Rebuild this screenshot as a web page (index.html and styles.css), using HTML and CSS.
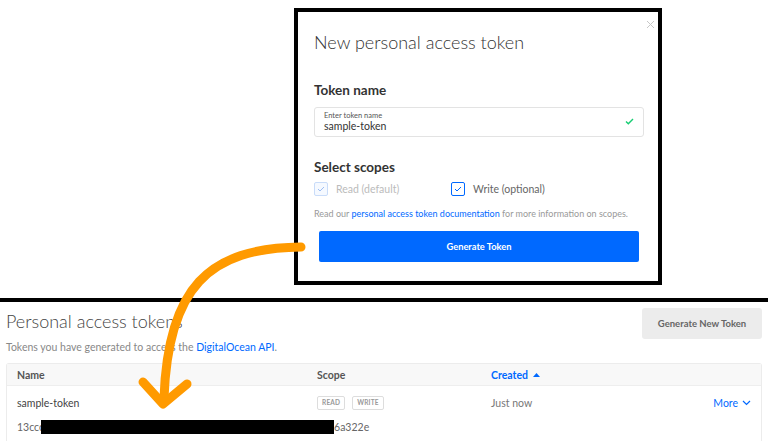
FILE: index.html
```html
<!DOCTYPE html>
<html lang="en">
<head>
  <meta charset="UTF-8" />
  <title>Personal access tokens</title>
  <link rel="stylesheet" href="styles.css">
</head>
<body>
  <div class="stage">
    <div class="modal">
      <span class="close">
        <svg width="9" height="9" viewBox="0 0 9 9"><path d="M1 1L8 8M8 1L1 8" stroke="#c8c8c8" stroke-width="1"/></svg>
      </span>
      <h2 class="modal-title">New personal access token</h2>

      <h3 class="section-title">Token name</h3>
      <div class="field">
        <div class="field-text">
          <span class="field-label">Enter token name</span>
          <span class="field-value">sample-token</span>
        </div>
        <svg class="field-check" width="9" height="7" viewBox="0 0 9 7"><path d="M1 3.6L3.3 5.8L8 1" fill="none" stroke="#15cd72" stroke-width="1.4"/></svg>
      </div>

      <h3 class="section-title scopes-title">Select scopes</h3>
      <div class="scopes">
        <label class="scope disabled">
          <span class="box"><svg width="8" height="6" viewBox="0 0 8 6"><path d="M1 3L3 5L7 1" fill="none" stroke="currentColor" stroke-width="1"/></svg></span>
          Read (default)
        </label>
        <label class="scope">
          <span class="box"><svg width="8" height="6" viewBox="0 0 8 6"><path d="M1 3L3 5L7 1" fill="none" stroke="currentColor" stroke-width="1"/></svg></span>
          Write (optional)
        </label>
      </div>
      <p class="help">Read our <a href="#">personal access token documentation</a> for more information on scopes.</p>
      <button class="primary">Generate Token</button>
    </div>
  </div>

  <div class="divider"></div>

  <div class="page">
    <div class="page-head">
      <div>
        <h1>Personal access tokens</h1>
        <p class="lead">Tokens you have generated to access the <a href="#">DigitalOcean API</a>.</p>
      </div>
      <button class="secondary">Generate New Token</button>
    </div>

    <div class="table">
      <div class="row head">
        <span>Name</span>
        <span>Scope</span>
        <span class="sort">Created
          <svg width="7" height="4" viewBox="0 0 7 4"><path d="M0 4L3.5 0L7 4Z" fill="#0069ff"/></svg>
        </span>
        <span></span>
      </div>
      <div class="row">
        <span class="name">sample-token</span>
        <span class="badges"><span class="badge">READ</span><span class="badge">WRITE</span></span>
        <span class="muted">Just now</span>
        <span class="more">More
          <svg width="9" height="6" viewBox="0 0 9 6"><path d="M1 1L4.5 4.5L8 1" fill="none" stroke="#0069ff" stroke-width="1.2"/></svg>
        </span>
      </div>
      <div class="token">13ccc<span class="redact"></span>6a322e</div>
    </div>
  </div>

  <svg class="arrow" width="768" height="442" viewBox="0 0 768 442">
    <path d="M301 247C208 248 168 288 164 398" fill="none" stroke="#ff9a00" stroke-width="9" stroke-linecap="round"/>
    <path d="M143 382L163 404L187 384" fill="none" stroke="#ff9a00" stroke-width="9" stroke-linecap="round" stroke-linejoin="round"/>
  </svg>
</body>
</html>
```

FILE: styles.css
```css
* {
  box-sizing: border-box;
  margin: 0;
  padding: 0;
}

body {
  font-family: Lato, "Liberation Sans", sans-serif;
  background: #fff;
  color: #333;
  width: 768px;
  height: 442px;
  overflow: hidden;
  position: relative;
}

a {
  color: #0069ff;
  text-decoration: none;
}

button {
  font-family: inherit;
  border: none;
  cursor: pointer;
}

.stage {
  height: 298px;
  padding: 8px 0 0 294px;
}

.modal {
  position: relative;
  width: 368px;
  height: 277px;
  border: 4px solid #000;
  background: #fff;
  padding: 19px 14px 0 16px;
}

.close {
  position: absolute;
  top: 8px;
  right: 3px;
  display: flex;
}

.modal-title {
  font-size: 18px;
  line-height: 22px;
  font-weight: 300;
  color: #333;
}

.section-title {
  font-size: 13.5px;
  line-height: 18px;
  font-weight: 700;
  color: #333;
  margin-top: 28px;
}

.scopes-title {
  margin-top: 21px;
}

.field {
  margin-top: 8px;
  height: 30px;
  border: 1px solid #e3e3e3;
  border-radius: 3px;
  padding: 0 9px;
  display: flex;
  align-items: center;
  justify-content: space-between;
}

.field-text {
  display: flex;
  flex-direction: column;
}

.field-label {
  font-size: 7.5px;
  line-height: 9px;
  color: #555;
}

.field-value {
  font-size: 10.5px;
  line-height: 13px;
  color: #333;
}

.field-check {
  margin-top: -2px;
}

.scopes {
  display: flex;
  margin-top: 6px;
  height: 14px;
}

.scope {
  display: flex;
  align-items: center;
  gap: 8px;
  font-size: 10.5px;
  color: #666;
  width: 137px;
}

.box {
  width: 14px;
  height: 14px;
  border: 1.5px solid #0069ff;
  border-radius: 2px;
  color: #0069ff;
  display: flex;
  align-items: center;
  justify-content: center;
}

.scope.disabled {
  color: #bbb;
}

.scope.disabled .box {
  border-color: #c9dcf9;
  background: #f5f9ff;
  color: #9dbdf2;
}

.help {
  margin-top: 12px;
  font-size: 9px;
  line-height: 12px;
  color: #999;
}

.primary {
  display: block;
  margin: 11px 5px 0 5px;
  width: 320px;
  height: 31px;
  border-radius: 2px;
  background: #0069ff;
  color: #fff;
  font-size: 9.3px;
  font-weight: 700;
}

.divider {
  height: 4px;
  background: #000;
}

.page {
  padding: 6px 6px 0 6px;
}

.page-head {
  display: flex;
  justify-content: space-between;
  align-items: flex-start;
}

h1 {
  margin-top: 2px;
  font-size: 18px;
  line-height: 22px;
  font-weight: 300;
  color: #444;
}

.lead {
  margin-top: 8px;
  font-size: 10.5px;
  line-height: 14px;
  color: #888;
}

.secondary {
  width: 120px;
  height: 31px;
  border-radius: 3px;
  background: #ececec;
  color: #666;
  font-size: 9.5px;
  font-weight: 700;
}

.table {
  margin-top: 9px;
  border: 1px solid #ececec;
  border-bottom: none;
  border-radius: 3px 3px 0 0;
  height: 78px;
}

.row {
  display: grid;
  grid-template-columns: 300px 174px 1fr auto;
  align-items: center;
  padding: 0 10px;
  height: 34px;
  font-size: 10.5px;
  color: #444;
}

.row.head {
  height: 22px;
  background: #f8f8f8;
  border-bottom: 1px solid #eee;
  font-weight: 700;
  color: #555;
}

.sort {
  color: #0069ff;
  display: flex;
  align-items: center;
  gap: 5px;
}

.badges {
  display: flex;
  gap: 7px;
}

.badge {
  border: 1px solid #ddd;
  border-radius: 2px;
  padding: 0 4px;
  height: 14px;
  line-height: 12px;
  font-size: 6.5px;
  font-weight: 700;
  color: #999;
  letter-spacing: 0.2px;
}

.muted {
  color: #777;
}

.more {
  color: #0069ff;
  display: flex;
  align-items: center;
  gap: 4px;
}

.token {
  padding: 0 10px;
  font-size: 10.5px;
  color: #666;
  display: flex;
  align-items: center;
  height: 14px;
}

.redact {
  display: inline-block;
  width: 293px;
  height: 14px;
  background: #000;
  margin-left: -3px;
}

.arrow {
  position: absolute;
  top: 0;
  left: 0;
  pointer-events: none;
}
```
